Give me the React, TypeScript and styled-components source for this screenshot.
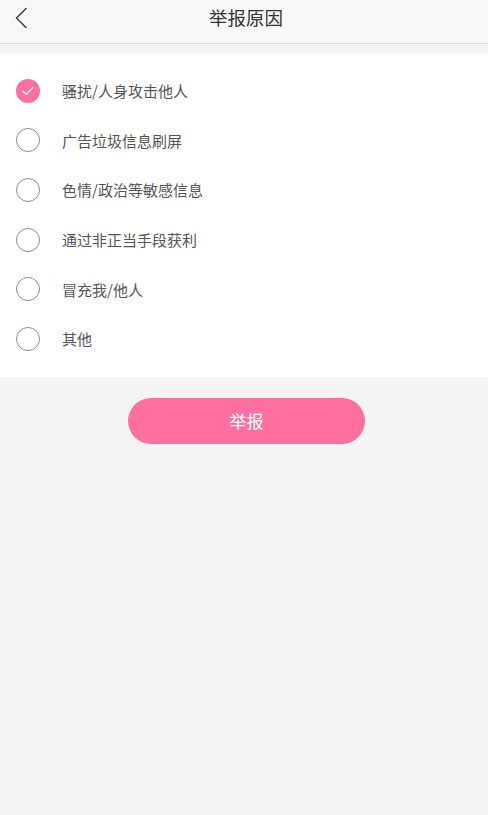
import { useState } from "react";
import styled, { createGlobalStyle } from "styled-components";

const GlobalStyle = createGlobalStyle`
  html, body {
    margin: 0;
    padding: 0;
    background: #f4f4f4;
    font-family: "Noto Sans CJK SC", "Noto Sans", sans-serif;
  }
`;

const reasons = [
  "骚扰/人身攻击他人",
  "广告垃圾信息刷屏",
  "色情/政治等敏感信息",
  "通过非正当手段获利",
  "冒充我/他人",
  "其他",
];

export default function App() {
  const [selected, setSelected] = useState(0);

  return (
    <Page>
      <GlobalStyle />
      <Header>
        <BackButton aria-label="返回">
          <svg width="14" height="22" viewBox="0 0 14 22" fill="none">
            <path d="M12 1.5L2.5 11L12 20.5" stroke="#444" strokeWidth="1.6" strokeLinecap="round" strokeLinejoin="round" />
          </svg>
        </BackButton>
        <Title>举报原因</Title>
      </Header>
      <List>
        {reasons.map((reason, i) => (
          <Row key={reason} onClick={() => setSelected(i)}>
            <Radio $checked={selected === i}>
              {selected === i && (
                <svg width="12" height="10" viewBox="0 0 12 10" fill="none">
                  <path d="M1 5.2L4.3 8.3L11 1.5" stroke="#fff" strokeWidth="1.2" strokeLinecap="round" strokeLinejoin="round" />
                </svg>
              )}
            </Radio>
            <Label>{reason}</Label>
          </Row>
        ))}
      </List>
      <Footer>
        <SubmitButton>举报</SubmitButton>
      </Footer>
    </Page>
  );
}

const Page = styled.div`
  min-height: 815px;
  background: #f4f4f4;
`;

const Header = styled.div`
  position: relative;
  height: 43px;
  display: flex;
  align-items: center;
  justify-content: center;
  padding-left: 4px;
  background: #f8f8f8;
  border-bottom: 1px solid #dcdcdc;
`;

const BackButton = styled.button`
  position: absolute;
  left: 14px;
  top: 7px;
  padding: 0;
  border: none;
  background: none;
  display: flex;
`;

const Title = styled.div`
  font-size: 18.5px;
  color: #333;
  margin-top: -9px;
`;

const List = styled.div`
  margin-top: 10px;
  background: #fff;
  padding: 12px 0 13px;
`;

const Row = styled.div`
  height: 49.6px;
  display: flex;
  align-items: center;
  padding-left: 16px;
  cursor: pointer;
`;

const Radio = styled.div<{ $checked: boolean }>`
  width: 24px;
  height: 24px;
  box-sizing: border-box;
  border-radius: 50%;
  display: flex;
  align-items: center;
  justify-content: center;
  border: ${(p) => (p.$checked ? "none" : "1px solid #8a8a8a")};
  background: ${(p) => (p.$checked ? "#ff6fa0" : "#fff")};
`;

const Label = styled.span`
  margin-left: 22px;
  font-size: 15px;
  color: #555;
`;

const Footer = styled.div`
  display: flex;
  justify-content: center;
  padding: 21px 0 0 5px;
`;

const SubmitButton = styled.button`
  width: 237px;
  height: 46px;
  border: none;
  border-radius: 23px;
  background: #ff70a0;
  color: #fff;
  font-family: inherit;
  font-size: 17px;
`;
